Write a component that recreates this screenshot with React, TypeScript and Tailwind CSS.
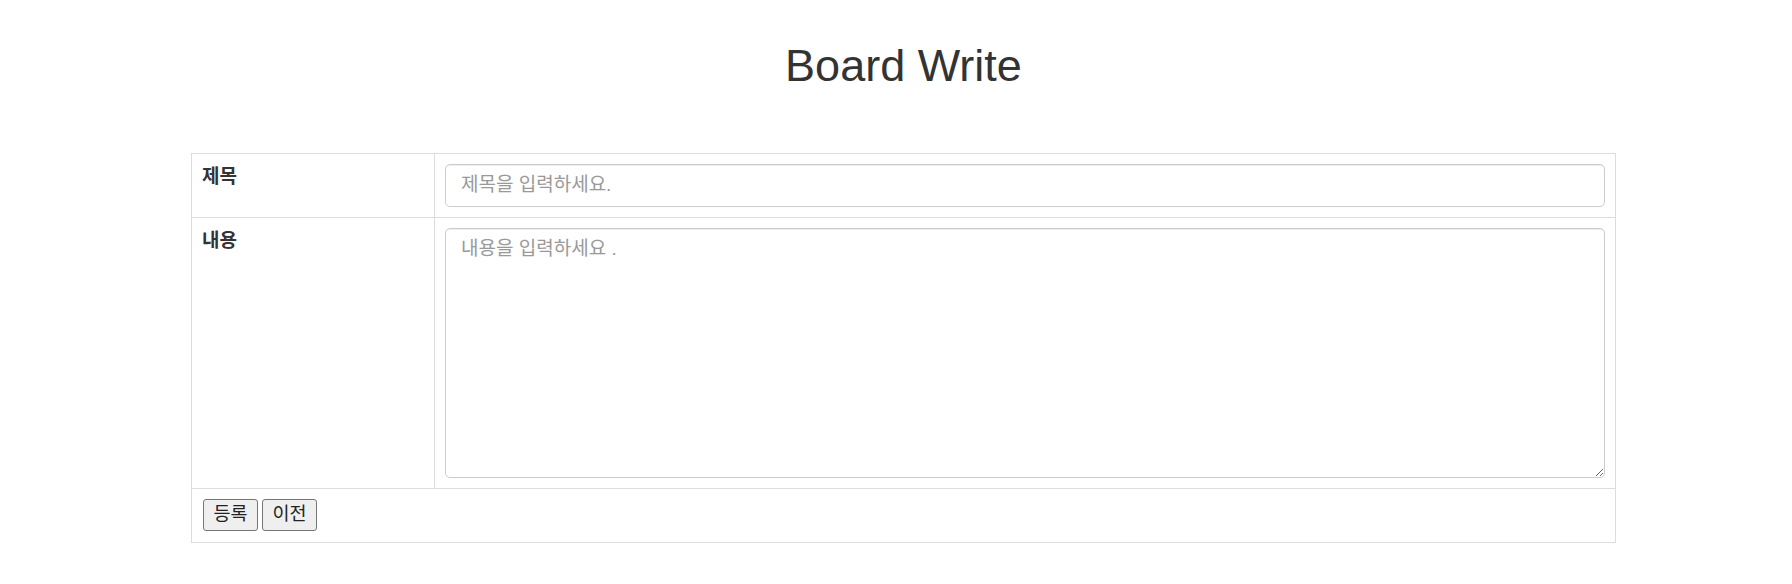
const fontStack = {
  fontFamily: '"Liberation Sans", Arial, "Noto Sans CJK KR", sans-serif',
};

const App = () => {
  return (
    <div className="min-h-[584px] w-full bg-white text-[#333]" style={fontStack}>
      <div className="ml-[191px] w-[1425px] pt-[41px]">
        <h1 className="text-center text-[45px] font-normal leading-[1.1]">Board Write</h1>

        <div className="mt-[62px] border border-[#ddd] text-[19px] leading-[25px]">
          {/* 제목 */}
          <div className="flex border-b border-[#ddd]">
            <div className="w-[243px] shrink-0 border-r border-[#ddd] p-[10px] font-bold">제목</div>
            <div className="grow p-[10px]">
              <input
                type="text"
                placeholder="제목을 입력하세요."
                className="block h-[43px] w-full rounded-[5px] border border-[#ccc] px-[15px] text-[19px] text-[#555] shadow-[inset_0_1px_1px_rgba(0,0,0,0.075)] outline-none placeholder:text-[#999]"
              />
            </div>
          </div>

          {/* 내용 */}
          <div className="flex border-b border-[#ddd]">
            <div className="w-[243px] shrink-0 border-r border-[#ddd] p-[10px] font-bold">내용</div>
            <div className="grow p-[10px]">
              <textarea
                placeholder="내용을 입력하세요 ."
                className="block h-[250px] w-full rounded-[5px] border border-[#ccc] px-[15px] py-[7px] text-[19px] leading-[25px] text-[#555] shadow-[inset_0_1px_1px_rgba(0,0,0,0.075)] outline-none placeholder:text-[#999]"
              />
            </div>
          </div>

          <div className="flex gap-[4px] px-[11px] pt-[10px] pb-[11px]">
            <button className="h-[32px] w-[55px] rounded-[3px] border border-[#767676] bg-[#efefef] text-[18.5px] font-normal leading-none text-[#222]">
              등록
            </button>
            <button className="h-[32px] w-[55px] rounded-[3px] border border-[#767676] bg-[#efefef] text-[18.5px] font-normal leading-none text-[#222]">
              이전
            </button>
          </div>
        </div>
      </div>
    </div>
  );
};

export default App;
